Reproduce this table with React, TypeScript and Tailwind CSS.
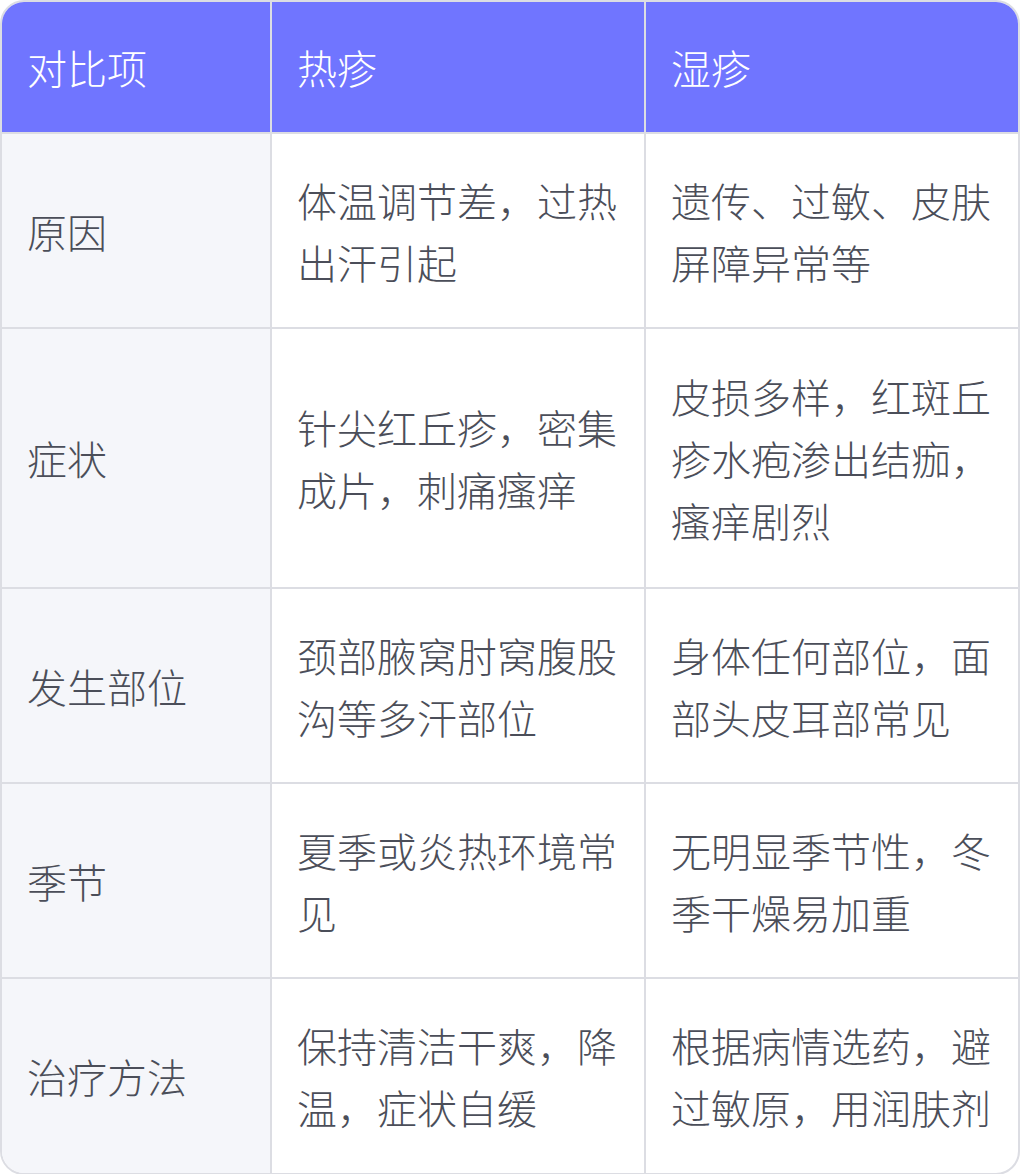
const rows = [
  { item: '原因', heat: '体温调节差，过热出汗引起', eczema: '遗传、过敏、皮肤屏障异常等', h: 'h-[195px]' },
  { item: '症状', heat: '针尖红丘疹，密集成片，刺痛瘙痒', eczema: '皮损多样，红斑丘疹水疱渗出结痂，瘙痒剧烈', h: 'h-[260px]' },
  { item: '发生部位', heat: '颈部腋窝肘窝腹股沟等多汗部位', eczema: '身体任何部位，面部头皮耳部常见', h: 'h-[195px]' },
  { item: '季节', heat: '夏季或炎热环境常见', eczema: '无明显季节性，冬季干燥易加重', h: 'h-[195px]' },
  { item: '治疗方法', heat: '保持清洁干爽，降温，症状自缓', eczema: '根据病情选药，避过敏原，用润肤剂', h: 'h-[195px]' },
];

export default function App() {
  return (
    <div className="w-[1020px] h-[1174px] bg-white font-['Noto_Sans_CJK_SC','Noto_Sans',sans-serif]">
      <div className="rounded-[24px] border-2 border-[#dcdde3] overflow-hidden">
        <table className="w-full table-fixed border-collapse text-[40px] leading-[62px] font-light">
          <colgroup>
            <col className="w-[269px]" />
            <col className="w-[374px]" />
            <col />
          </colgroup>
          <thead>
            <tr className="bg-[#7075ff] text-white h-[131px]">
              <th className="text-left font-light px-[25px]">对比项</th>
              <th className="text-left font-light px-[25px] border-l-2 border-[#dcdde3]">热疹</th>
              <th className="text-left font-light px-[25px] border-l-2 border-[#dcdde3]">湿疹</th>
            </tr>
          </thead>
          <tbody className="text-[#4b4e59]">
            {rows.map((r) => (
              <tr key={r.item} className={`${r.h} border-t-2 border-[#dcdde3]`}>
                <td className="bg-[#f5f6fa] px-[25px] align-middle">{r.item}</td>
                <td className="px-[25px] border-l-2 border-[#dcdde3] align-middle">{r.heat}</td>
                <td className="px-[25px] border-l-2 border-[#dcdde3] align-middle">{r.eczema}</td>
              </tr>
            ))}
          </tbody>
        </table>
      </div>
    </div>
  );
}
